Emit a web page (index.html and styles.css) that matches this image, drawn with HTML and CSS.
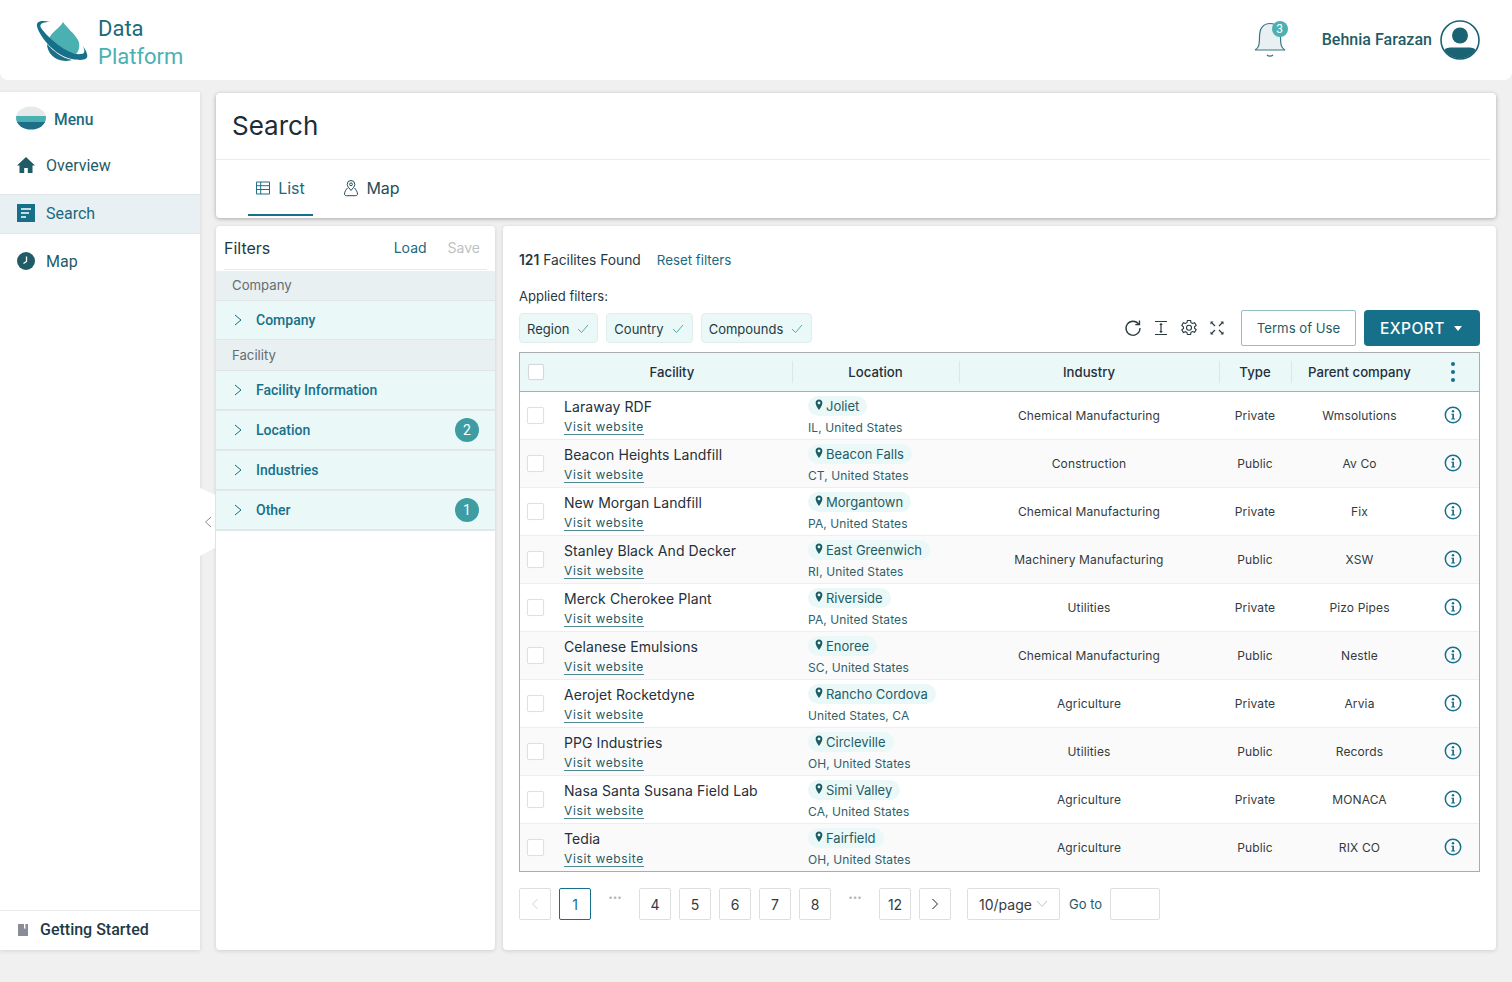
FILE: index.html
```html
<!DOCTYPE html>
<html lang="en">
<head>
<meta charset="utf-8">
<title>Data Platform</title>
<link rel="stylesheet" href="styles.css">
</head>
<body>
<svg class="defs" width="0" height="0" aria-hidden="true">
  <symbol id="pin" viewBox="0 0 8 12"><path d="M4 .5C2 .5.6 2 .6 3.900c0 2.400 2.200 5 3.400 7.100 1.200-2.100 3.400-4.700 3.400-7.100C7.400 2 6 .5 4 .5zm0 4.800a1.400 1.400 0 1 1 0-2.800 1.400 1.400 0 0 1 0 2.800z" fill="#1f5c66" fill-rule="evenodd"/></symbol>
  <symbol id="info" viewBox="0 0 18 18"><circle cx="9" cy="9" r="7.700" fill="none" stroke="#16708a" stroke-width="1.500"/><circle cx="9" cy="5.300" r="1.200" fill="#16708a"/><path d="M7.300 7.800H10v4.800h1.100v1H7.200v-1h1.100V8.800h-1z" fill="#16708a"/></symbol>
  <symbol id="chev" viewBox="0 0 10 12"><path d="M2 1l6 5-6 5" fill="none" stroke="#1a6a80" stroke-width="1"/></symbol>
  <symbol id="check" viewBox="0 0 12 10"><path d="M1 5l3.500 3.500L11 1" fill="none" stroke="#48aeb0" stroke-width="1"/></symbol>
</svg>

<header class="topbar">
  <div class="brand">
    <svg class="logo" width="54" height="46" viewBox="0 0 54 46">
      <path d="M27 2C24 8 15 12 13 19c7 8 17 14 27 15 4-4 4-10 2-14C38 13 31 8 27 2z" fill="#4bb0b2"/>
      <path d="M11 24c0 8 7 17 19 17 3 0 5-1 6-1-10-2-19-9-25-16z" fill="#1d6f87"/>
      <path d="M14 2C6 0 0 1 1 6c1 8 17 30 35 33 10 2 17 1 15-5-1-4-3-6-4-8 2 5 2 8-2 8C33 36 12 18 5 8 3 4 6 2 14 2z" fill="#16708a"/>
    </svg>
    <div class="brand-text"><span class="brand-a">Data</span><span class="brand-b">Platform</span></div>
  </div>
  <div class="user">
    <div class="bell">
      <svg width="32" height="38" viewBox="0 0 32 38">
        <path d="M1 29c4-2 4.500-6 4.500-13C5.500 7 9.500 2.500 16 2.500S26.500 7 26.500 16c0 7 .5 11 4.500 13z" fill="#e8f0f3" stroke="#3b7483" stroke-width="1.200"/>
        <path d="M13 34c1.500 1.500 4.500 1.500 6 0" fill="none" stroke="#3b7483" stroke-width="1.200"/>
      </svg>
      <span class="bell-badge">3</span>
    </div>
    <span class="user-name">Behnia Farazan</span>
    <svg class="avatar" width="40" height="40" viewBox="0 0 40 40">
      <defs><clipPath id="avclip"><circle cx="20" cy="20" r="18.500"/></clipPath></defs>
      <circle cx="20" cy="20" r="19" fill="#fff" stroke="#1a6375" stroke-width="1.600"/>
      <circle cx="20" cy="15.500" r="8" fill="#1a6375"/>
      <path d="M5 29c3-2 7-1.500 15-1.500S32 27 35 29v12H5z" fill="#1a6375" clip-path="url(#avclip)"/>
    </svg>
  </div>
</header>

<div class="shell">
  <aside class="sidebar">
    <div class="menu-title">
      <svg width="30" height="24" viewBox="0 0 30 24">
        <defs><clipPath id="mclip"><ellipse cx="15" cy="12" rx="15" ry="11.500"/></clipPath></defs>
        <g clip-path="url(#mclip)"><rect width="30" height="10" fill="#e6e9ea"/><rect y="10" width="30" height="7" fill="#4bb0b2"/><rect y="16" width="30" height="8" fill="#1d6f87"/></g>
      </svg>
      <span>Menu</span>
    </div>
    <nav class="nav">
      <a class="nav-item">
        <svg width="20" height="20" viewBox="0 0 20 20"><path d="M10 2L1 10.500h2.500V18h4.700v-5h3.600v5h4.700v-7.500H19z" fill="#1f5c66"/></svg>
        Overview
      </a>
      <a class="nav-item nav-active">
        <svg width="20" height="20" viewBox="0 0 20 20"><rect x="1" y="1" width="18" height="18" fill="#16708a"/><path d="M5 6h10M5 10h8M5 14h5" stroke="#fff" stroke-width="1.500"/></svg>
        Search
      </a>
      <a class="nav-item">
        <svg width="20" height="20" viewBox="0 0 20 20"><circle cx="10" cy="10" r="9" fill="#1f5c66"/><path d="M10.500 5.500v5l-3 2" fill="none" stroke="#fff" stroke-width="1.300"/></svg>
        Map
      </a>
    </nav>
    <div class="side-foot">
      <svg width="10" height="12" viewBox="0 0 10 12"><path d="M0 0h6v5l.7-.8.700.8V0H10v12H0z" fill="#8a8d96"/></svg>
      Getting Started
    </div>
    <div class="collapse"><svg width="8" height="12" viewBox="0 0 8 12"><path d="M7 1L1.500 6 7 11" fill="none" stroke="#8a8d96"/></svg></div>
  </aside>

  <main class="main">
    <section class="search-card">
      <h1 class="title">Search</h1>
      <div class="tabs">
        <a class="tab tab-active">
          <svg width="16" height="14" viewBox="0 0 16 14"><path d="M1.500 1h13v12h-13zM1.500 4.700h13M1.500 8.500h13M5.700 1v12" fill="none" stroke="#1f6f85" stroke-width="1"/></svg>
          List
        </a>
        <a class="tab">
          <svg width="16" height="18" viewBox="0 0 16 18"><path d="M8 1.500a3.800 3.800 0 0 0-3.800 3.800c0 2.200 2.300 4.300 3.800 6.200 1.500-1.900 3.800-4 3.800-6.200A3.800 3.800 0 0 0 8 1.500z" fill="none" stroke="#1f4f5a"/><circle cx="8" cy="5.300" r="1.400" fill="none" stroke="#1f4f5a"/><path d="M4.800 8.800C3.300 10 1.500 12.800 1.500 15c0 1.200 1 1.700 2 1.700h9c1 0 2-.5 2-1.700 0-2.200-1.800-5-3.300-6.200" fill="none" stroke="#1f4f5a"/></svg>
          Map
        </a>
      </div>
    </section>

    <div class="panels">
      <section class="filters">
        <div class="filters-head">
          <span class="filters-title">Filters</span>
          <span class="fl-actions"><a class="link">Load</a><a class="muted">Save</a></span>
        </div>
        <div class="f-group">Company</div>
        <div class="f-item f-thin"><svg class="f-chev" width="10" height="12"><use href="#chev"/></svg>Company</div>
        <div class="f-group f-group-tall">Facility</div>
        <div class="f-item"><svg class="f-chev" width="10" height="12"><use href="#chev"/></svg>Facility Information</div>
        <div class="f-item"><svg class="f-chev" width="10" height="12"><use href="#chev"/></svg>Location<span class="count">2</span></div>
        <div class="f-item"><svg class="f-chev" width="10" height="12"><use href="#chev"/></svg>Industries</div>
        <div class="f-item"><svg class="f-chev" width="10" height="12"><use href="#chev"/></svg>Other<span class="count">1</span></div>
      </section>

      <section class="results">
        <div class="found"><span><b>121</b> Facilites Found</span><a class="link-reset">Reset filters</a></div>
        <div class="applied">Applied filters:</div>
        <div class="toolbar">
          <div class="chips">
            <span class="chip">Region<svg width="12" height="10"><use href="#check"/></svg></span>
            <span class="chip">Country<svg width="12" height="10"><use href="#check"/></svg></span>
            <span class="chip">Compounds<svg width="12" height="10"><use href="#check"/></svg></span>
          </div>
          <div class="tools">
            <svg width="18" height="18" viewBox="0 0 18 18"><path d="M14.700 5.200A7 7 0 1 0 16 9" fill="none" stroke="#2a3a40" stroke-width="1.300"/><path d="M15.500 1.500v4.200h-4.200" fill="none" stroke="#2a3a40" stroke-width="1.300"/></svg>
            <svg width="18" height="18" viewBox="0 0 18 18"><path d="M3 2.500h12M3 15.500h12M9 4.500v9" stroke="#2a3a40" stroke-width="1.200" fill="none"/><path d="M7.300 6L9 4l1.700 2zM7.300 12L9 14l1.700-2z" fill="#2a3a40"/></svg>
            <svg width="18" height="18" viewBox="0 0 18 18"><path d="M7.400 1.500h3.200l.4 2.200 1.500.8 2.100-.8 1.600 2.700-1.700 1.400v1.400l1.700 1.400-1.600 2.700-2.100-.8-1.500.8-.4 2.200H7.400L7 13.500l-1.500-.8-2.100.8-1.600-2.700 1.700-1.400V8L1.800 6.400l1.600-2.700 2.100.8L7 3.700z" fill="none" stroke="#2a3a40" stroke-width="1.100"/><circle cx="9" cy="8.800" r="2.500" fill="none" stroke="#2a3a40" stroke-width="1.100"/></svg>
            <svg width="18" height="18" viewBox="0 0 18 18"><path d="M3.500 3.500l3.500 3.500M14.500 3.500L11 7M3.500 14.500L7 11M14.500 14.500L11 11" stroke="#2a3a40" stroke-width="1.200"/><path d="M2.500 2.500h3l-3 3zM15.500 2.500h-3l3 3zM2.500 15.500h3l-3-3zM15.500 15.500h-3l3-3z" fill="#2a3a40"/></svg>
          </div>
          <button class="btn-terms">Terms of Use</button>
          <button class="btn-export">EXPORT<span class="caret"></span></button>
        </div>

        <div class="table">
          <div class="row row-head">
            <div class="cell"><span class="cb cb-head"></span></div>
            <div class="cell th">Facility</div>
            <div class="cell th th-sep">Location</div>
            <div class="cell th th-sep">Industry</div>
            <div class="cell th th-sep">Type</div>
            <div class="cell th th-sep">Parent company</div>
            <div class="cell"><span class="kebab"><i></i><i></i><i></i></span></div>
          </div>

          <div class="row"><div class="cell"><span class="cb"></span></div><div class="fac"><span class="fac-name">Laraway RDF</span><a class="visit">Visit website</a></div><div class="loc"><span class="pill"><svg width="8" height="12"><use href="#pin"/></svg>Joliet</span><span class="loc-sub">IL, United States</span></div><div class="cell td">Chemical Manufacturing</div><div class="cell td">Private</div><div class="cell td">Wmsolutions</div><div class="cell"><svg width="18" height="18"><use href="#info"/></svg></div></div>

          <div class="row"><div class="cell"><span class="cb"></span></div><div class="fac"><span class="fac-name">Beacon Heights Landfill</span><a class="visit">Visit website</a></div><div class="loc"><span class="pill"><svg width="8" height="12"><use href="#pin"/></svg>Beacon Falls</span><span class="loc-sub">CT, United States</span></div><div class="cell td">Construction</div><div class="cell td">Public</div><div class="cell td">Av Co</div><div class="cell"><svg width="18" height="18"><use href="#info"/></svg></div></div>

          <div class="row"><div class="cell"><span class="cb"></span></div><div class="fac"><span class="fac-name">New Morgan Landfill</span><a class="visit">Visit website</a></div><div class="loc"><span class="pill"><svg width="8" height="12"><use href="#pin"/></svg>Morgantown</span><span class="loc-sub">PA, United States</span></div><div class="cell td">Chemical Manufacturing</div><div class="cell td">Private</div><div class="cell td">Fix</div><div class="cell"><svg width="18" height="18"><use href="#info"/></svg></div></div>

          <div class="row"><div class="cell"><span class="cb"></span></div><div class="fac"><span class="fac-name">Stanley Black And Decker</span><a class="visit">Visit website</a></div><div class="loc"><span class="pill"><svg width="8" height="12"><use href="#pin"/></svg>East Greenwich</span><span class="loc-sub">RI, United States</span></div><div class="cell td">Machinery Manufacturing</div><div class="cell td">Public</div><div class="cell td">XSW</div><div class="cell"><svg width="18" height="18"><use href="#info"/></svg></div></div>

          <div class="row"><div class="cell"><span class="cb"></span></div><div class="fac"><span class="fac-name">Merck Cherokee Plant</span><a class="visit">Visit website</a></div><div class="loc"><span class="pill"><svg width="8" height="12"><use href="#pin"/></svg>Riverside</span><span class="loc-sub">PA, United States</span></div><div class="cell td">Utilities</div><div class="cell td">Private</div><div class="cell td">Pizo Pipes</div><div class="cell"><svg width="18" height="18"><use href="#info"/></svg></div></div>

          <div class="row"><div class="cell"><span class="cb"></span></div><div class="fac"><span class="fac-name">Celanese Emulsions</span><a class="visit">Visit website</a></div><div class="loc"><span class="pill"><svg width="8" height="12"><use href="#pin"/></svg>Enoree</span><span class="loc-sub">SC, United States</span></div><div class="cell td">Chemical Manufacturing</div><div class="cell td">Public</div><div class="cell td">Nestle</div><div class="cell"><svg width="18" height="18"><use href="#info"/></svg></div></div>

          <div class="row"><div class="cell"><span class="cb"></span></div><div class="fac"><span class="fac-name">Aerojet Rocketdyne</span><a class="visit">Visit website</a></div><div class="loc"><span class="pill"><svg width="8" height="12"><use href="#pin"/></svg>Rancho Cordova</span><span class="loc-sub">United States, CA</span></div><div class="cell td">Agriculture</div><div class="cell td">Private</div><div class="cell td">Arvia</div><div class="cell"><svg width="18" height="18"><use href="#info"/></svg></div></div>

          <div class="row"><div class="cell"><span class="cb"></span></div><div class="fac"><span class="fac-name">PPG Industries</span><a class="visit">Visit website</a></div><div class="loc"><span class="pill"><svg width="8" height="12"><use href="#pin"/></svg>Circleville</span><span class="loc-sub">OH, United States</span></div><div class="cell td">Utilities</div><div class="cell td">Public</div><div class="cell td">Records</div><div class="cell"><svg width="18" height="18"><use href="#info"/></svg></div></div>

          <div class="row"><div class="cell"><span class="cb"></span></div><div class="fac"><span class="fac-name">Nasa Santa Susana Field Lab</span><a class="visit">Visit website</a></div><div class="loc"><span class="pill"><svg width="8" height="12"><use href="#pin"/></svg>Simi Valley</span><span class="loc-sub">CA, United States</span></div><div class="cell td">Agriculture</div><div class="cell td">Private</div><div class="cell td">MONACA</div><div class="cell"><svg width="18" height="18"><use href="#info"/></svg></div></div>

          <div class="row"><div class="cell"><span class="cb"></span></div><div class="fac"><span class="fac-name">Tedia</span><a class="visit">Visit website</a></div><div class="loc"><span class="pill"><svg width="8" height="12"><use href="#pin"/></svg>Fairfield</span><span class="loc-sub">OH, United States</span></div><div class="cell td">Agriculture</div><div class="cell td">Public</div><div class="cell td">RIX CO</div><div class="cell"><svg width="18" height="18"><use href="#info"/></svg></div></div>
        </div>

        <div class="pager">
          <span class="pg pg-off"><svg width="8" height="12" viewBox="0 0 8 12"><path d="M6.500 1L1.500 6l5 5" fill="none" stroke="#d5d5d5"/></svg></span>
          <span class="pg pg-on">1</span>
          <span class="pg-dots">•••</span>
          <span class="pg">4</span><span class="pg">5</span><span class="pg">6</span><span class="pg">7</span><span class="pg">8</span>
          <span class="pg-dots">•••</span>
          <span class="pg">12</span>
          <span class="pg"><svg width="8" height="12" viewBox="0 0 8 12"><path d="M1.500 1l5 5-5 5" fill="none" stroke="#222"/></svg></span>
          <span class="pg-size">10/page<svg width="12" height="8" viewBox="0 0 12 8"><path d="M1 1l5 5.500L11 1" fill="none" stroke="#c4c4c4"/></svg></span>
          <span class="goto">Go to</span>
          <span class="goto-box"></span>
        </div>
      </section>
    </div>
  </main>
</div>
</body>
</html>
```

FILE: styles.css
```css
* { box-sizing: border-box; }
html, body { margin: 0; padding: 0; }
body {
  width: 1512px;
  height: 982px;
  overflow: hidden;
  background: #f0f0f0;
  font-family: Inter, "Liberation Sans", sans-serif;
  color: #1f3a44;
}
.defs { position: absolute; }
a { cursor: pointer; }

/* top bar */
.topbar {
  height: 80px;
  background: #fff;
  border-radius: 0 0 8px 8px;
  display: flex;
  align-items: center;
  justify-content: space-between;
  padding: 0 32px 0 36px;
}
.brand { display: flex; align-items: center; gap: 8px; }
.logo { display: block; margin-top: 5px; }
.brand-text { display: flex; flex-direction: column; font-size: 22px; line-height: 28px; margin-top: 6px; font-family: Roboto, sans-serif; }
.brand-a { color: #1a6a80; }
.brand-b { color: #4bb0b2; }
.user { display: flex; align-items: center; }
.bell { position: relative; width: 32px; height: 38px; margin-right: 36px; }
.bell svg { display: block; }
.bell-badge {
  position: absolute; right: -2px; top: 0;
  width: 16px; height: 16px; border-radius: 50%;
  background: #4bb0b2; color: #fff;
  font-size: 12px; line-height: 16px; text-align: center;
  font-family: Roboto, sans-serif;
}
.user-name { font: 500 16px/20px Roboto, sans-serif; color: #1f5c66; margin-right: 8px; letter-spacing: .03px; }
.avatar { display: block; }

/* shell */
.shell { display: flex; height: 870px; padding-top: 12px; }
.sidebar {
  position: relative;
  width: 200px; height: 858px;
  background: #fff;
  box-shadow: 0 1px 4px rgba(0,0,0,.12);
  display: flex; flex-direction: column;
  flex-shrink: 0;
}
.menu-title {
  display: flex; align-items: center; gap: 8px;
  height: 54px; padding-left: 16px; padding-top: 2px;
  font: 500 15.600px Roboto, sans-serif; color: #1a6a80;
}
.menu-title svg { margin-bottom: 4px; }
.nav { flex: 1; display: flex; flex-direction: column; }
.nav-item {
  display: flex; align-items: center; gap: 10px;
  height: 40px; margin-bottom: 8px; padding: 0 0 2px 16px;
  font: 400 16px Roboto, sans-serif; color: #1f5c66;
}
.nav-active {
  background: #e8f0f3; color: #1a6a80;
  box-shadow: inset 0 1px 0 #e0e5e7, inset 0 -1px 0 #e0e5e7;
}
.side-foot {
  display: flex; align-items: center; gap: 12px;
  height: 40px; padding: 0 0 2px 18px;
  border-top: 1px solid #e8eaea;
  font: 500 16px Roboto, sans-serif; color: #1f3a44;
}
.collapse {
  position: absolute; left: 200px; top: 396px;
  width: 15px; height: 68px;
  background: #fff;
  clip-path: polygon(0 0, 100% 10%, 100% 88%, 0 100%);
  display: flex; align-items: center; padding-left: 4px;
}

/* main */
.main { margin-left: 16px; width: 1280px; display: flex; flex-direction: column; padding-top: 1px; }
.search-card {
  height: 125px;
  background: #fff;
  border-radius: 4px;
  box-shadow: 0 1px 4px rgba(0,0,0,.3);
  margin-bottom: 8px;
}
.title {
  margin: 0 6px 0 0; height: 67px;
  padding: 15px 0 0 16px;
  font: 400 26px/36px Inter, sans-serif;
  color: #1c2d38;
  border-bottom: 1px solid #eceeee;
}
.tabs { display: flex; padding-left: 32px; height: 56px; }
.tab {
  display: flex; align-items: center; justify-content: center; gap: 7px;
  height: 56px; width: 65px; margin-right: 26px;
  font: 400 16px Inter, sans-serif; color: #1f4f5a;
}
.tab-active { color: #1a6a80; border-bottom: 2px solid #16708a; padding: 2px 1px 0 0; }
.panels { display: flex; gap: 8px; height: 724px; }

/* filters */
.filters {
  width: 279px; background: #fff;
  border-radius: 4px;
  box-shadow: 0 1px 4px rgba(0,0,0,.14);
}
.filters-head {
  display: flex; align-items: center; justify-content: space-between;
  height: 44px; margin: 0 8px 1px 8px;
  padding-right: 7px;
  border-bottom: 1px solid #e8eaea;
}
.filters-title { font: 400 16px Inter, sans-serif; color: #1f3a44; }
.fl-actions { display: flex; gap: 21px; font-size: 14px; }
.link { color: #1a6a80; font-size: 14px; }
.muted { color: #bdc3c5; }
.f-group {
  display: flex; align-items: center;
  height: 30px; padding: 0 0 2px 16px;
  background: #e8f0f2;
  border-bottom: 1px solid #e0e5e7;
  font: 400 13.200px Inter, sans-serif; color: #666c70;
}
.f-group-tall { height: 31px; padding-bottom: 1px; }
.f-item {
  display: flex; align-items: center;
  height: 40px; padding: 0 16px 0 17px;
  background: #ebf8f8;
  border-bottom: 2px solid #e3e7e9;
  font: 500 14px Roboto, sans-serif; color: #16708a;
}
.f-thin { height: 39px; border-bottom-width: 1px; }
.f-chev { margin-right: 13px; flex-shrink: 0; }
.count {
  margin-left: auto;
  width: 24px; height: 24px; border-radius: 50%;
  background: #3e9da3; color: #fff;
  font: 400 14px/24px Roboto, sans-serif; text-align: center;
}

/* results */
.results {
  width: 993px; background: #fff;
  border-radius: 4px;
  box-shadow: 0 1px 4px rgba(0,0,0,.14);
  padding: 0 16px;
  display: flex; flex-direction: column;
}
.found {
  display: flex; gap: 16px; align-items: center;
  height: 20px; margin-top: 24px;
  font-size: 13.800px; color: #1f3a44;
}
.found b { font-weight: 600; }
.link-reset { color: #1a6a80; font-size: 13.300px; }
.applied { margin-top: 16px; height: 20px; line-height: 20px; font-size: 13px; color: #1f3a44; }
.toolbar { display: flex; align-items: center; height: 36px; margin-top: 4px; }
.chips { display: flex; gap: 8px; flex: 1; }
.chip {
  display: flex; align-items: center; gap: 8px;
  height: 30px; padding: 1px 8px 0 7px;
  background: #ebf8f8;
  border: 1px solid #e3ecec;
  border-radius: 4px;
  font-size: 13px; color: #1f3a44;
}
.tools { display: flex; gap: 10px; margin-right: 15px; }
.tools svg { display: block; }
.btn-terms {
  width: 115px; height: 36px;
  background: #fff;
  border: 1px solid #8fc0c4;
  border-radius: 2px;
  font: 400 13.200px Inter, sans-serif; color: #1f5c66;
  margin-right: 8px; padding: 0;
}
.btn-export {
  width: 116px; height: 36px;
  background: #16708a; color: #fff;
  border: 0; border-radius: 4px;
  font: 500 15.500px Inter, sans-serif; letter-spacing: .45px;
  display: flex; align-items: center; justify-content: flex-start; gap: 9px;
  padding: 0 0 0 16px;
}
.caret { width: 0; height: 0; border-left: 4px solid transparent; border-right: 4px solid transparent; border-top: 5px solid #fff; }

/* table */
.table { margin-top: 6px; border: 1px solid #a9adb0; height: 520px; width: 961px; }
.row {
  display: grid;
  grid-template-columns: 32px 240px 167px 260px 72px 137px 50px;
  height: 48px;
  border-bottom: 1px solid #eeeeee;
}
.row:nth-child(odd):not(.row-head) { background: #fafafa; }
.row:last-child { border-bottom: 0; height: 47px; }
.row:not(.row-head) .cell:last-child { padding-bottom: 2px; }
.row:not(.row-head) .td { padding-bottom: 1px; }
.row-head {
  height: 39px;
  background: #ebf8f8;
  border-bottom: 1px solid #a9adb0;
}
.cell { display: flex; align-items: center; justify-content: center; }
.cb {
  width: 17px; height: 17px;
  background: #fff;
  border: 1px solid #e0e0e0;
  border-radius: 2px;
  box-shadow: 0 0 1px rgba(0,0,0,.08);
  margin-right: 1px;
}
.cb-head { border-color: #d4d8da; width: 16px; height: 16px; margin-right: 0; }
.th { font: 500 13.200px Inter, sans-serif; color: #25303a; position: relative; }
.th-sep::before {
  content: "";
  position: absolute; left: 0; top: 8px; bottom: 8px;
  width: 1px; background: #dfe6e7;
}
.kebab { display: flex; flex-direction: column; gap: 4px; }
.kebab i { display: block; width: 4px; height: 4px; border-radius: 50%; background: #16708a; }
.td { font: 400 12px Inter, sans-serif; color: #333a40; letter-spacing: .14px; }
.fac { display: flex; flex-direction: column; justify-content: flex-start; padding: 6px 0 0 12px; }
.fac-name { font: 400 14px/18px Inter, sans-serif; color: #25303a; letter-spacing: .07px; }
.visit {
  align-self: flex-start;
  font: 400 12px/14px Inter, sans-serif; color: #1f5c66; letter-spacing: .62px;
  border-bottom: 1px solid #4f8a94;
  margin-top: 4px;
}
.loc { display: flex; flex-direction: column; align-items: flex-start; padding: 4px 0 0 16px; }
.pill {
  display: inline-flex; align-items: center; gap: 3px;
  height: 20px; padding: 0 8px 0 7px;
  background: #ebf8f8;
  border-radius: 10px;
  font: 400 13px Inter, sans-serif; color: #1f5c66;
}
.pill svg { margin-top: -3px; }
.loc-sub { font: 400 12px/14px Inter, sans-serif; color: #2f5f6a; margin-top: 5px; letter-spacing: .1px; }

/* pager */
.pager { display: flex; align-items: center; gap: 8px; margin-top: 16px; height: 32px; }
.pg {
  width: 32px; height: 32px;
  display: flex; align-items: center; justify-content: center;
  border: 1px solid #dedede;
  border-radius: 2px;
  font: 400 14px Inter, sans-serif; color: #333a40;
}
.pg-off { color: #ccc; }
.pg-on { border-color: #16708a; color: #16708a; }
.pg-dots {
  width: 32px; height: 32px; text-align: center;
  font-size: 8px; line-height: 18px; color: #b8b8b8;
}
.pg-size {
  display: flex; align-items: center; justify-content: space-between;
  width: 93px; height: 32px;
  margin-left: 8px;
  padding: 0 11px;
  border: 1px solid #dedede;
  border-radius: 2px;
  font-size: 14px; color: #333a40;
}
.goto { font-size: 13px; color: #1f5c66; margin-left: 1px; }
.goto-box { width: 50px; height: 32px; border: 1px solid #dedede; border-radius: 2px; }
```
